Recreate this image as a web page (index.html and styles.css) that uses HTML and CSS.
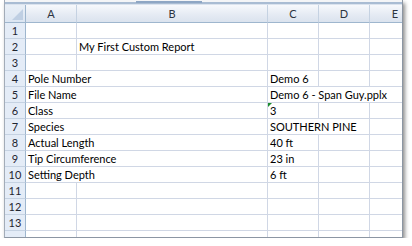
FILE: index.html
```html
<!DOCTYPE html>
<html lang="en">
<head>
<meta charset="UTF-8" />
<title>My First Custom Report</title>
<link rel="stylesheet" href="styles.css">
</head>
<body>
<div class="sheet">
  <div class="topbar"><span class="thumb"></span></div>
  <div class="grid">
    <div class="corner"><span class="tri"></span></div>
    <div class="colhead">A</div>
    <div class="colhead">B</div>
    <div class="colhead">C</div>
    <div class="colhead">D</div>
    <div class="colhead">E</div>

    <div class="rowhead">1</div>
    <div class="cell"></div><div class="cell"></div><div class="cell"></div><div class="cell"></div><div class="cell"></div>

    <div class="rowhead">2</div>
    <div class="cell"></div><div class="cell">My First Custom Report</div><div class="cell"></div><div class="cell"></div><div class="cell"></div>

    <div class="rowhead">3</div>
    <div class="cell"></div><div class="cell"></div><div class="cell"></div><div class="cell"></div><div class="cell"></div>

    <div class="rowhead">4</div>
    <div class="cell span2">Pole Number</div><div class="cell">Demo 6</div><div class="cell"></div><div class="cell"></div>

    <div class="rowhead">5</div>
    <div class="cell span2">File Name</div><div class="cell span3">Demo 6 - Span Guy.pplx</div>

    <div class="rowhead">6</div>
    <div class="cell span2">Class</div><div class="cell flag">3</div><div class="cell"></div><div class="cell"></div>

    <div class="rowhead">7</div>
    <div class="cell span2">Species</div><div class="cell span2">SOUTHERN PINE</div><div class="cell"></div>

    <div class="rowhead">8</div>
    <div class="cell span2">Actual Length</div><div class="cell">40 ft</div><div class="cell"></div><div class="cell"></div>

    <div class="rowhead">9</div>
    <div class="cell span2">Tip Circumference</div><div class="cell">23 in</div><div class="cell"></div><div class="cell"></div>

    <div class="rowhead">10</div>
    <div class="cell span2">Setting Depth</div><div class="cell">6 ft</div><div class="cell"></div><div class="cell"></div>

    <div class="rowhead">11</div>
    <div class="cell"></div><div class="cell"></div><div class="cell"></div><div class="cell"></div><div class="cell"></div>

    <div class="rowhead">12</div>
    <div class="cell"></div><div class="cell"></div><div class="cell"></div><div class="cell"></div><div class="cell"></div>

    <div class="rowhead">13</div>
    <div class="cell"></div><div class="cell"></div><div class="cell"></div><div class="cell"></div><div class="cell"></div>

    <div class="rowhead"></div>
    <div class="cell"></div><div class="cell"></div><div class="cell"></div><div class="cell"></div><div class="cell"></div>
  </div>
</div>
</body>
</html>
```

FILE: styles.css
```css
* { box-sizing: border-box; }
html, body {
  margin: 0; padding: 0;
  background: #fff;
  font-family: Lato, 'Open Sans', sans-serif;
  font-size: 11px;
  color: #000;
}
.sheet {
  margin-left: 4px;
  width: 399px;
  height: 238px;
  overflow: hidden;
  border-left: 1px solid #a3acb8;
  border-right: 1px solid #8c96a3;
  border-bottom: 1px solid #8c96a3;
  box-shadow: 2px 3px 4px rgba(0,0,0,0.45);
  background: #fff;
}
/* window edge above the headers */
.topbar {
  position: relative;
  height: 5px;
  background: #f4f5f7;
  border-bottom: 1px solid #dbe3ee;
  box-shadow: inset 0 -2px 0 #a9bcd3;
}
.thumb {
  position: absolute;
  left: 131px; top: 1px;
  width: 66px; height: 2px;
  background: #8ea6c4;
}
.grid {
  display: grid;
  grid-template-columns: 21px 51px 191px 51px 51px 51px;
  grid-template-rows: 18px;
  grid-auto-rows: 16px;
  width: 416px;
}
.grid > div {
  border-right: 1px solid #d0d7e5;
  border-bottom: 1px solid #d0d7e5;
  white-space: nowrap;
  overflow: hidden;
}
.corner {
  position: relative;
  background: linear-gradient(#e9eff7, #dce6f2);
  border-right-color: #9eb6ce !important;
  border-bottom-color: #9eb6ce !important;
}
.tri {
  position: absolute;
  right: 2px; bottom: 2px;
  width: 0; height: 0;
  border-left: 11px solid transparent;
  border-bottom: 11px solid #bfcfe3;
}
.colhead {
  background: linear-gradient(#f7f9fc, #e4eaf3 60%, #dbe3ee);
  border-right-color: #c5d2e2 !important;
  border-bottom-color: #9eb6ce !important;
  text-align: center;
  line-height: 17px;
  color: #2d3440;
}
.rowhead {
  background: #e4ecf7;
  border-right-color: #9eb6ce !important;
  border-bottom-color: #c5d2e2 !important;
  text-align: center;
  line-height: 15px;
  color: #1f2530;
}
.cell {
  padding-left: 2px;
  line-height: 15px;
}
.span2 { grid-column: span 2; }
.span3 { grid-column: span 3; }
.flag { position: relative; }
.flag::before {
  content: "";
  position: absolute;
  left: 0; top: 0;
  border-top: 4px solid #1c8c2e;
  border-right: 4px solid transparent;
}
```
